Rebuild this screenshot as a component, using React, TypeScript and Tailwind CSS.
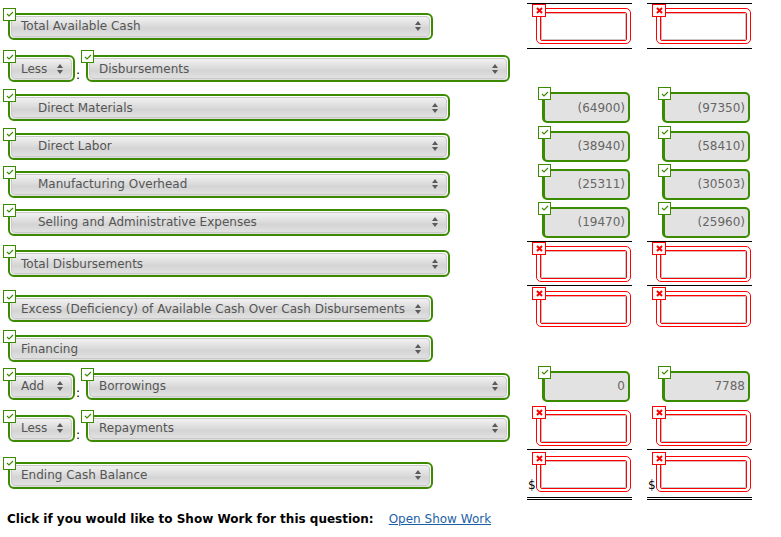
import React from "react";

const font = { fontFamily: '"DejaVu Sans", Verdana, sans-serif' };

function CheckBadge() {
  return (
    <span className="absolute -left-[7px] -top-[7px] w-[13px] h-[13px] bg-white border border-[#3b8b00] flex items-center justify-center z-10">
      <svg width="8" height="6" viewBox="0 0 8 6">
        <path d="M1 3 L3 5 L7 1" stroke="#3b8b00" strokeWidth="1.1" fill="none" />
      </svg>
    </span>
  );
}

function XBadge() {
  return (
    <span className="absolute -left-[5px] -top-[5px] w-[14px] h-[13px] bg-white border border-[#f00] flex items-center justify-center z-10">
      <svg width="7" height="7" viewBox="0 0 7 7">
        <path d="M1 1 L6 6 M6 1 L1 6" stroke="#f00" strokeWidth="2" />
      </svg>
    </span>
  );
}

function Arrows() {
  return (
    <svg width="6" height="10" viewBox="0 0 6 10" className="shrink-0">
      <path d="M3 0 L6 4 L0 4 Z M0 6 L6 6 L3 10 Z" fill="#5a5a5a" />
    </svg>
  );
}

// green framed dropdown
function Sel({ w, label, indent }: { w: string; label: string; indent?: boolean }) {
  return (
    <div className={`relative ${w} h-[27px] rounded-[6px] border-2 border-[#3b8b00] p-[1px] bg-white`}>
      <CheckBadge />
      <div className="h-full rounded-[4px] border border-[#c9c9c9] bg-[linear-gradient(#f1f1f1,#dcdcdc_45%,#d4d4d4_60%,#e1e1e1)] shadow-[0_1px_1px_rgba(0,0,0,0.15)] flex items-center">
        <span className={`${indent ? "pl-[26px]" : "pl-[9px]"} flex-1 text-[12px] text-[#555] leading-none whitespace-nowrap`}>
          {label}
        </span>
        <span className="pr-[8px]">
          <Arrows />
        </span>
      </div>
    </div>
  );
}

function Colon() {
  return <span className="w-[11px] h-[27px] flex items-end pl-[1px] text-[12px] leading-[14px] text-black">:</span>;
}

function Num({ v }: { v: string }) {
  return (
    <div className="relative ml-[15px] w-[88px] h-[31px] rounded-[5px] border-2 border-l-[3px] border-[#3b8b00] bg-[#e2e2e2] flex items-center justify-end pr-[3px] text-[12px] text-[#666]">
      <CheckBadge />
      {v}
    </div>
  );
}

function Err() {
  return (
    <div className="relative ml-[9px] w-[95px] h-[36px] rounded-[5px] border border-[#f00] p-[3px] pb-[2px] bg-white">
      <XBadge />
      <div className="h-full rounded-[2px] border border-[#f00]">
        <div className="h-full border border-[#c8c8c8] border-l-[#e6b0b0] border-t-[#e6b0b0]" />
      </div>
    </div>
  );
}

type Cell = "none" | "err" | string;

function Row({
  h,
  left,
  cells,
  line,
  dollar,
}: {
  h: string;
  left: React.ReactNode;
  cells: [Cell, Cell];
  line?: string;
  dollar?: boolean;
}) {
  return (
    <div className={`flex ${h}`}>
      <div className="w-[527px] flex items-center pl-[8px]">{left}</div>
      {cells.map((c, i) => (
        <div key={i} className={`relative w-[105px] flex items-center ${i === 1 ? "ml-[15px]" : ""} ${line ?? ""}`}>
          {dollar && <span className="absolute left-[1px] top-[28px] text-[12px] leading-[14px] text-black">$</span>}
          {c === "none" ? null : c === "err" ? <Err /> : <Num v={c} />}
        </div>
      ))}
    </div>
  );
}

export default function App() {
  return (
    <div className="w-[781px] h-[537px] bg-white pt-[3px] overflow-hidden" style={font}>
      <Row
        h="h-[46px]"
        line="border-y border-black"
        left={<Sel w="w-[425px]" label="Total Available Cash" />}
        cells={["err", "err"]}
      />
      <Row
        h="h-[39px]"
        left={
          <>
            <Sel w="w-[67px]" label="Less" />
            <Colon />
            <Sel w="w-[424px]" label="Disbursements" />
          </>
        }
        cells={["none", "none"]}
      />
      <Row h="h-[39px]" left={<Sel w="w-[442px]" label="Direct Materials" indent />} cells={["(64900)", "(97350)"]} />
      <Row h="h-[38px]" left={<Sel w="w-[442px]" label="Direct Labor" indent />} cells={["(38940)", "(58410)"]} />
      <Row h="h-[38px]" left={<Sel w="w-[442px]" label="Manufacturing Overhead" indent />} cells={["(25311)", "(30503)"]} />
      <Row
        h="h-[38px]"
        left={<Sel w="w-[442px]" label="Selling and Administrative Expenses" indent />}
        cells={["(19470)", "(25960)"]}
      />
      <Row
        h="h-[45px]"
        line="border-y border-black"
        left={<Sel w="w-[442px]" label="Total Disbursements" />}
        cells={["err", "err"]}
      />
      <Row
        h="h-[45px]"
        left={<Sel w="w-[425px]" label="Excess (Deficiency) of Available Cash Over Cash Disbursements" />}
        cells={["err", "err"]}
      />
      <Row h="h-[35px]" left={<Sel w="w-[425px]" label="Financing" />} cells={["none", "none"]} />
      <Row
        h="h-[40px]"
        left={
          <>
            <Sel w="w-[67px]" label="Add" />
            <Colon />
            <Sel w="w-[424px]" label="Borrowings" />
          </>
        }
        cells={["0", "7788"]}
      />
      <Row
        h="h-[44px]"
        line="border-b border-black"
        left={
          <>
            <Sel w="w-[67px]" label="Less" />
            <Colon />
            <Sel w="w-[424px]" label="Repayments" />
          </>
        }
        cells={["err", "err"]}
      />
      <Row
        h="h-[50px]"
        line="border-b-[3px] border-double border-black"
        dollar
        left={<Sel w="w-[425px]" label="Ending Cash Balance" />}
        cells={["err", "err"]}
      />
      <div className="pt-[11px] pl-[7px] flex items-center text-[12px] leading-[16px]">
        <span className="font-bold text-black">Click if you would like to Show Work for this question:</span>
        <a className="ml-[15px] text-[#1d5fa6] underline cursor-pointer">Open Show Work</a>
      </div>
    </div>
  );
}
